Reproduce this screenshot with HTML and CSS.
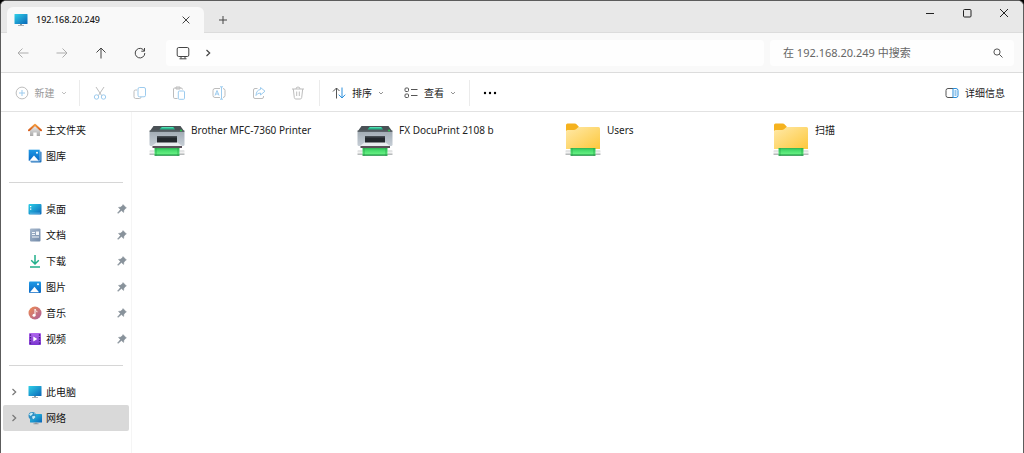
FILE: index.html
```html
<!DOCTYPE html>
<html lang="zh-CN">
<head>
<meta charset="utf-8">
<title>192.168.20.249</title>
<link rel="stylesheet" href="styles.css">
</head>
<body>
<svg class="sprite" aria-hidden="true">
  <defs>
    <linearGradient id="g-screen" x1="0" y1="0" x2="1" y2="1"><stop offset="0" stop-color="#2fd0e8"/><stop offset="1" stop-color="#0a66b8"/></linearGradient>
    <linearGradient id="g-blue" x1="0" y1="0" x2="0" y2="1"><stop offset="0" stop-color="#1f9be6"/><stop offset="1" stop-color="#0a68c4"/></linearGradient>
    <linearGradient id="g-roof" x1="0" y1="0" x2="0" y2="1"><stop offset="0" stop-color="#f39b3f"/><stop offset="1" stop-color="#d65a18"/></linearGradient>
    <linearGradient id="g-wall" x1="0" y1="0" x2="0" y2="1"><stop offset="0" stop-color="#eeeeee"/><stop offset="1" stop-color="#a9a9a9"/></linearGradient>
    <linearGradient id="g-doc" x1="0" y1="0" x2="1" y2="1"><stop offset="0" stop-color="#a9bace"/><stop offset="1" stop-color="#7189a8"/></linearGradient>
    <linearGradient id="g-music" x1="0" y1="0" x2="1" y2="1"><stop offset="0" stop-color="#f08d50"/><stop offset="1" stop-color="#a95c9d"/></linearGradient>
    <linearGradient id="g-video" x1="0" y1="0" x2="0" y2="1"><stop offset="0" stop-color="#b067ee"/><stop offset="1" stop-color="#7a35cf"/></linearGradient>
    <linearGradient id="g-folder" x1="0" y1="0" x2="1" y2="1"><stop offset="0" stop-color="#ffe9a8"/><stop offset="1" stop-color="#fdc83c"/></linearGradient>
    <linearGradient id="g-cable" x1="0" y1="0" x2="0" y2="1"><stop offset="0" stop-color="#2fb052"/><stop offset=".25" stop-color="#42d869"/><stop offset=".7" stop-color="#62ee80"/><stop offset="1" stop-color="#12853a"/></linearGradient>
    <linearGradient id="g-pipe" x1="0" y1="0" x2="0" y2="1"><stop offset="0" stop-color="#c9cccd"/><stop offset=".4" stop-color="#f6f6f6"/><stop offset="1" stop-color="#a9adae"/></linearGradient>
    <linearGradient id="g-body" x1="0" y1="0" x2="0" y2="1"><stop offset="0" stop-color="#a3adb6"/><stop offset="1" stop-color="#c6ced6"/></linearGradient>
  </defs>
  <symbol id="i-monitor" viewBox="0 0 14 14">
    <rect x=".5" y="1" width="13" height="10" rx=".6" fill="url(#g-screen)"/>
    <path d="M6 11h2v1.2H6z" fill="#8e979e"/><path d="M4 12h6v1H4z" fill="#aab2b8"/>
  </symbol>
  <symbol id="i-network" viewBox="0 0 14 14">
    <rect x="2" y="3" width="12" height="8.500" rx=".6" fill="url(#g-screen)"/>
    <path d="M7 11.500h2v1H7zM5.500 12.300h5v.9h-5z" fill="#8e979e"/>
    <circle cx="4.300" cy="4.800" r="3.800" fill="#2f8fc4"/>
    <path d="M1 3.500l2-1.800 2 .3-.8 1.700L2.500 5zM4 5.500l2.500-.7L7.500 6 5.500 8.300 4.500 7.500zM6 1.700l1.500 1.200-.7.700z" fill="#c6ecf5"/>
  </symbol>
  <symbol id="i-home" viewBox="0 0 14 14">
    <path d="M2 6.500L7 2.500l5 4V13H8.700V9.500H5.300V13H2z" fill="url(#g-wall)"/>
    <path d="M1 7.300L7 1.800l6 5.500" fill="none" stroke="url(#g-roof)" stroke-width="1.900" stroke-linecap="round" stroke-linejoin="round"/>
  </symbol>
  <symbol id="i-gallery" viewBox="0 0 14 14">
    <rect x="2.500" y="2.500" width="11" height="11" rx="1" fill="#1f73bd"/>
    <rect x=".5" y=".5" width="11.500" height="11.500" rx="1" fill="url(#g-blue)" stroke="#e5f3fc" stroke-width=".5"/>
    <path d="M1.500 11.700L6 6.500l4.700 5.200z" fill="#fff"/><circle cx="9" cy="3.700" r="1" fill="#fff"/>
  </symbol>
  <symbol id="i-desktop" viewBox="0 0 14 14">
    <rect x=".5" y="2" width="13" height="10.500" rx="1" fill="url(#g-screen)"/>
    <path d="M2 4h1.300v1.300H2zM2 6.500h1.300v1.300H2z" fill="#fff"/><path d="M2 10.700h10v.7H2z" fill="#6fc1ee"/>
  </symbol>
  <symbol id="i-doc" viewBox="0 0 14 14">
    <rect x="2" y=".5" width="10.500" height="13" rx="1" fill="url(#g-doc)"/>
    <path d="M4 4h3v1H4zM4 6h3v1H4zM4 8.500h7v1H4zM8 3.500h3v3.500H8z" fill="#f2f6fa"/>
  </symbol>
  <symbol id="i-down" viewBox="0 0 14 14">
    <path d="M7 1v8.500M3.200 6.200L7 10l3.800-3.800M2 13h10" fill="none" stroke="#22b08b" stroke-width="1.500"/>
  </symbol>
  <symbol id="i-pic" viewBox="0 0 14 14">
    <rect x="1" y="1.500" width="12" height="11.500" rx="1" fill="url(#g-blue)"/>
    <path d="M2 12.300l4.500-5.500 4.500 5.500z" fill="#fff"/><circle cx="10" cy="4.300" r="1" fill="#fff"/>
  </symbol>
  <symbol id="i-music" viewBox="0 0 14 14">
    <circle cx="7" cy="7" r="6.500" fill="url(#g-music)"/>
    <circle cx="6" cy="9.200" r="1.500" fill="#fff"/><path d="M7 9.200V3.200c.3 1.300 2 1.500 2 3" fill="none" stroke="#fff" stroke-width="1"/>
  </symbol>
  <symbol id="i-video" viewBox="0 0 14 14">
    <rect x="1" y="1" width="12" height="12" rx="1" fill="url(#g-video)"/>
    <path d="M2.500 2.300v10M11.500 2.300v10" stroke="#45187f" stroke-width="1.300" stroke-dasharray="1.400 1.300"/>
    <path d="M5.300 4.500L9.300 7l-4 2.500z" fill="#fff"/>
  </symbol>
  <symbol id="i-pin" viewBox="0 0 10 10">
    <path d="M6 .6L9.400 4 8.500 4.500 6.900 6.200 6.600 8.500 4.400 6.600 1 9.400.6 9 3.400 5.600 1.500 3.400 3.800 3.100 5.500 1.500z" fill="#88929b" stroke="#88929b" stroke-width=".5"/>
  </symbol>
  <symbol id="i-cable" viewBox="0 0 36 8">
    <rect x=".5" y="2.500" width="35" height="4.500" rx=".5" fill="url(#g-pipe)"/>
    <rect x="5.500" y="0" width="25" height="7.800" fill="url(#g-cable)"/>
    <path d="M7 0v7.800M29 0v7.800" stroke="#1f9a45" stroke-width=".6"/>
  </symbol>
  <symbol id="i-printer" viewBox="0 0 36 36">
    <path d="M4.500 3h27L35 8H1z" fill="#4a5156"/>
    <path d="M12.500 4h12l1.500 2.500H10.500z" fill="#28b88d"/><path d="M13 4h11l.6.900H12.400z" fill="#52ddb0"/>
    <path d="M.5 7.500h35v1.500H.5z" fill="#5c646a"/><circle cx="32" cy="7.500" r=".9" fill="#25d34a"/>
    <path d="M.5 9h35v12.500q0 1.500-1.500 1.500H2Q.5 23 .5 21.500z" fill="url(#g-body)"/>
    <rect x="8" y="13" width="20" height="7" fill="#22272c"/><path d="M8 13h20v1.500H8z" fill="#454c52"/>
    <path d="M7.500 19.500h21l5 3.700h-31z" fill="#e9ecef"/><path d="M3.500 23h29.500v2H3.500z" fill="#5a5058"/>
    <use href="#i-cable" x="0" y="25" width="36" height="8"/>
  </symbol>
  <symbol id="i-folder" viewBox="0 0 36 36">
    <path d="M1 2q0-1.500 1.500-1.500h7q1.500 0 2.500 1.200L14 4l-3 4H1z" fill="#f5b21e"/>
    <path d="M1 8.500q0-1.500 1.500-1.500H9q1 0 2-.8L13 4.500q.7-.5 1.500-.5h19q1.500 0 1.500 1.500V26H1z" fill="url(#g-folder)"/>
    <use href="#i-cable" x="0" y="25" width="36" height="8"/>
  </symbol>
  <symbol id="i-chev" viewBox="0 0 6 6"><path d="M1 2l2 2 2-2" fill="none" stroke="currentColor" stroke-width=".9"/></symbol>
  <symbol id="i-right" viewBox="0 0 8 8"><path d="M2.500 1L5.700 4 2.500 7" fill="none" stroke="currentColor" stroke-width="1.200"/></symbol>
</svg>

<div class="window">
  <header class="titlebar">
    <div class="tab">
      <svg class="ic14"><use href="#i-monitor"/></svg>
      <span class="tab-title">192.168.20.249</span>
      <button class="tab-close" aria-label="关闭标签页"><svg class="ic8" viewBox="0 0 8 8"><path d="M.6.600l6.800 6.800M7.400.600L.6 7.400" class="ln"/></svg></button>
    </div>
    <button class="tab-new" aria-label="新标签页"><svg class="ic10" viewBox="0 0 10 10"><path d="M5 1v8M1 5h8" class="ln"/></svg></button>
    <div class="win-controls">
      <button aria-label="最小化"><svg class="ic10" viewBox="0 0 10 10"><path d="M1 5.500h8" class="ln"/></svg></button>
      <button aria-label="最大化"><svg class="ic10" viewBox="0 0 10 10"><rect x="1.500" y="1.500" width="7.500" height="7.500" rx="1" class="ln"/></svg></button>
      <button aria-label="关闭"><svg class="ic10" viewBox="0 0 10 10"><path d="M1 1l8 8M9 1L1 9" class="ln"/></svg></button>
    </div>
  </header>

  <nav class="navbar">
    <div class="nav-buttons">
      <button class="off" aria-label="后退"><svg class="ic12" viewBox="0 0 12 12"><path d="M11.500 6H1.500M5.500 1.500L1 6l4.500 4.500" class="ln"/></svg></button>
      <button class="off" aria-label="前进"><svg class="ic12" viewBox="0 0 12 12"><path d="M.5 6h10M6.500 1.500L11 6l-4.500 4.500" class="ln"/></svg></button>
      <button aria-label="向上"><svg class="ic12" viewBox="0 0 12 12"><path d="M6 11.500V1.500M1.500 5.500L6 1l4.500 4.500" class="ln"/></svg></button>
      <button aria-label="刷新"><svg class="ic12" viewBox="0 0 12 12"><path d="M10.300 4A4.800 4.800 0 1 0 10.800 6M10.500 1v3.200H7.300" class="ln"/></svg></button>
    </div>
    <div class="address">
      <button aria-label="网络位置"><svg class="ic14" viewBox="0 0 14 14"><rect x="1.200" y="1.500" width="11.600" height="9" rx="1.500" class="ln"/><path d="M5 10.500v2M9 10.500v2M3.500 12.800h7" class="ln"/></svg></button>
      <button aria-label="展开"><svg class="ic8"><use href="#i-right"/></svg></button>
    </div>
    <div class="search">
      <input type="text" aria-label="搜索" placeholder="在 192.168.20.249 中搜索">
      <svg class="ic10" viewBox="0 0 10 10"><circle cx="4" cy="4" r="3.100" class="ln"/><path d="M6.300 6.300L9.500 9.500" class="ln"/></svg>
    </div>
  </nav>

  <div class="toolbar">
    <button class="tool new off"><svg class="ic14" viewBox="0 0 14 14"><circle cx="7" cy="7" r="5.900" class="ln"/><path d="M7 4v6M4 7h6" class="bl"/></svg><span>新建</span><svg class="ic6"><use href="#i-chev"/></svg></button>
    <div class="icons">
      <button class="off" aria-label="剪切"><svg class="ic14" viewBox="0 0 14 14"><path d="M3 1l5.800 8.800M11 1L5.200 9.800" class="ln"/><circle cx="3.500" cy="11" r="2.200" class="bl"/><circle cx="10.500" cy="11" r="2.200" class="bl"/></svg></button>
      <button class="off" aria-label="复制"><svg class="ic14" viewBox="0 0 14 14"><path d="M4 4H2.500Q1 4 1 5.500v5.300Q1 12.500 2.700 12.500h4Q8 12.500 8 11" class="ln"/><rect x="5" y="1.500" width="7.500" height="9.300" rx="1.500" class="bl"/></svg></button>
      <button class="off" aria-label="粘贴"><svg class="ic14" viewBox="0 0 14 14"><path d="M5.500 12.500H2.800Q1.500 12.500 1.500 11.200V3Q1.500 2 2.800 2H9Q10.500 2 10.500 3.500M4 1h4v2H4z" class="ln"/><rect x="6.300" y="5" width="6.200" height="8.300" rx="1" class="bl"/></svg></button>
      <button class="off" aria-label="重命名"><svg class="ic14" viewBox="0 0 14 14"><path d="M8 2.500H3Q1 2.500 1 4.500v5q0 2 2 2h5M11 2.500q2 .2 2 2v5q0 1.800-2 2" class="ln"/><path d="M3 9.500L5 4.500l2 5M3.800 8h2.500M9.500 1v12M8 .8h3M8 13.200h3" class="bl"/></svg></button>
      <button class="off" aria-label="共享"><svg class="ic14" viewBox="0 0 14 14"><path d="M5.500 2.500H3Q1.500 2.500 1.500 4v7q0 1.500 1.500 1.500h7q1.500 0 1.500-1.500v-1" class="ln"/><path d="M8.500 1.500L13 5.200 8.500 9V7Q5.500 6.800 4 9.500 4.300 4 8.500 3.500z" class="bl"/></svg></button>
      <button class="off" aria-label="删除"><svg class="ic14" viewBox="0 0 14 14"><path d="M1 3h12M5 3Q5 1 7 1t2 2M2.300 3l1 8.500q.2 1.500 1.500 1.500h4.400q1.300 0 1.500-1.500l1-8.500M5.700 5.500v4.500M8.300 5.500v4.500" class="ln"/></svg></button>
    </div>
    <div class="menus">
      <button class="tool"><svg class="ic14" viewBox="0 0 14 14"><path d="M4.500 12.500V2M1 5.500L4.500 2 7.500 5" class="ln"/><path d="M10 1.500v10.300M6.800 8.700L10 12l3.200-3.300" class="bl"/></svg><span>排序</span><svg class="ic6"><use href="#i-chev"/></svg></button>
      <button class="tool"><svg class="ic14" viewBox="0 0 14 14"><rect x="1" y="2" width="3.500" height="3.500" rx="1" class="ln"/><rect x="1" y="8" width="3.500" height="3.500" rx="1" class="ln"/><path d="M7 3.500h6.500M7 9.500h6.500" class="ln"/></svg><span>查看</span><svg class="ic6"><use href="#i-chev"/></svg></button>
    </div>
    <button class="more" aria-label="更多"><svg class="ic14" viewBox="0 0 14 14"><circle cx="2" cy="7" r="1.200"/><circle cx="7" cy="7" r="1.200"/><circle cx="12" cy="7" r="1.200"/></svg></button>
    <button class="tool details"><svg class="ic14" viewBox="0 0 14 14"><path d="M8 2.500H3q-2 0-2 2v5q0 2 2 2h5" class="ln"/><path d="M8 2.500h3q2 0 2 2v5q0 2-2 2H8zM9.500 5h2M9.500 7h2M9.500 9h2" class="bl"/></svg><span>详细信息</span></button>
  </div>

  <div class="body">
    <aside class="sidebar">
      <ul>
        <li><a href="#"><svg class="ic14"><use href="#i-home"/></svg>主文件夹</a></li>
        <li><a href="#"><svg class="ic14"><use href="#i-gallery"/></svg>图库</a></li>
      </ul>
      <hr>
      <ul>
        <li><a href="#"><svg class="ic14"><use href="#i-desktop"/></svg>桌面<svg class="pin"><use href="#i-pin"/></svg></a></li>
        <li><a href="#"><svg class="ic14"><use href="#i-doc"/></svg>文档<svg class="pin"><use href="#i-pin"/></svg></a></li>
        <li><a href="#"><svg class="ic14"><use href="#i-down"/></svg>下载<svg class="pin"><use href="#i-pin"/></svg></a></li>
        <li><a href="#"><svg class="ic14"><use href="#i-pic"/></svg>图片<svg class="pin"><use href="#i-pin"/></svg></a></li>
        <li><a href="#"><svg class="ic14"><use href="#i-music"/></svg>音乐<svg class="pin"><use href="#i-pin"/></svg></a></li>
        <li><a href="#"><svg class="ic14"><use href="#i-video"/></svg>视频<svg class="pin"><use href="#i-pin"/></svg></a></li>
      </ul>
      <hr>
      <ul class="tree">
        <li><a href="#"><svg class="ic8"><use href="#i-right"/></svg><svg class="ic14"><use href="#i-monitor"/></svg>此电脑</a></li>
        <li><a href="#" class="selected"><svg class="ic8"><use href="#i-right"/></svg><svg class="ic14"><use href="#i-network"/></svg>网络</a></li>
      </ul>
    </aside>
    <main class="files">
      <a href="#"><svg class="ic36"><use href="#i-printer"/></svg><span>Brother MFC-7360 Printer</span></a>
      <a href="#"><svg class="ic36"><use href="#i-printer"/></svg><span>FX DocuPrint 2108 b</span></a>
      <a href="#"><svg class="ic36"><use href="#i-folder"/></svg><span>Users</span></a>
      <a href="#"><svg class="ic36"><use href="#i-folder"/></svg><span>扫描</span></a>
    </main>
  </div>
</div>
</body>
</html>
```
FILE: styles.css
```css
* { box-sizing: border-box; }
html, body { height: 100%; }
body {
  margin: 0;
  background: #000;
  color: #1b1b1b;
  font: 10px/14px "Noto Sans", "Noto Sans CJK SC", sans-serif;
}
button {
  display: flex;
  align-items: center;
  justify-content: center;
  padding: 0;
  border: 0;
  background: none;
  color: #444;
  font: inherit;
}
a { color: inherit; text-decoration: none; }
ul { margin: 0; padding: 0; list-style: none; }
svg { flex: none; display: block; }
.sprite { position: absolute; width: 0; height: 0; }
.ic6 { width: 6px; height: 6px; }
.ic8 { width: 8px; height: 8px; }
.ic10 { width: 10px; height: 10px; }
.ic12 { width: 12px; height: 12px; }
.ic14 { width: 14px; height: 14px; }
.ic36 { width: 36px; height: 36px; }
.ln, .bl { fill: none; stroke: currentColor; stroke-width: 1; }
.bl { stroke: #2a8fdc; }

.window {
  display: flex;
  flex-direction: column;
  min-height: 100%;
  overflow: hidden;
  border: 1px solid #5c5c5c;
  border-bottom: 0;
  border-radius: 6px 6px 0 0;
  background: #fff;
}

.titlebar {
  display: flex;
  height: 32px;
  border-bottom: 1px solid #dcdcdc;
  background: #e8e8e8;
}
.tab {
  display: flex;
  align-items: center;
  width: 197px;
  height: 26px;
  margin: 6px 0 0 6px;
  padding: 0 9px 0 7px;
  border-radius: 6px 6px 0 0;
  background: #f9f9f9;
}
.tab-title { flex: 1; margin-left: 8px; font-size: 9px; font-weight: 500; }
.tab-close, .tab-new { width: 18px; height: 18px; }
.tab-new { margin: 10px 0 0 10px; }
.win-controls { display: flex; margin-left: auto; padding-right: 1px; }
.win-controls button { width: 37px; height: 24px; color: #222; }

.navbar {
  display: flex;
  align-items: center;
  height: 40px;
  padding-right: 9px;
  border-bottom: 1px solid #dcdcdc;
  background: #f9f9f9;
}
.nav-buttons { display: flex; width: 165px; padding-left: 2px; }
.nav-buttons button { width: 39px; height: 28px; }
.nav-buttons .off { color: #adadad; }
.address, .search {
  display: flex;
  align-items: center;
  height: 26px;
  border-radius: 4px;
  background: #fefefe;
}
.address { flex: 1; gap: 14px; padding-left: 10px; }
.search { width: 244px; margin-left: 6px; padding: 0 11px 0 13px; color: #555; }
.search input {
  flex: 1;
  min-width: 0;
  padding: 0;
  border: 0;
  outline: 0;
  background: none;
  font: 11px/16px "Noto Sans", "Noto Sans CJK SC", sans-serif;
}
.search input::placeholder { color: #666; opacity: 1; }

.toolbar {
  display: flex;
  align-items: center;
  height: 39px;
  padding: 2px 18px 0 0;
  border-bottom: 1px solid #e2e2e2;
}
.tool { gap: 6px; color: #555; }
.tool span { color: #222; }
.tool .ic6 { color: #888; }
.toolbar .off { color: #bdbdbd; }
.toolbar .off span { color: #999; }
.toolbar .off .ic6 { color: #b8b8b8; }
.toolbar .off .bl { stroke: #9ccbee; }
.new, .icons, .menus { height: 26px; border-right: 1px solid #ebebeb; }
.new { width: 79px; padding-left: 1px; }
.icons { display: flex; width: 240px; padding-right: 1px; }
.icons button { flex: 1; }
.menus { display: flex; gap: 20px; width: 150px; padding-left: 12px; }
.more { margin-left: 13px; color: #222; }
.details { margin-left: auto; }

.body { display: flex; flex: 1; }
.sidebar { width: 131px; padding: 5px 2px 0; border-right: 1px solid #f5f5f5; color: #111; }
.sidebar a {
  display: flex;
  align-items: center;
  gap: 4px;
  height: 26px;
  padding-left: 25px;
}
.sidebar .tree a { padding-left: 7px; }
.tree .ic8 { margin-right: 6px; color: #777; }
.sidebar .selected { border-radius: 2px; background: #d9d9d9; }
.sidebar hr { height: 1px; margin: 13px 6px; border: 0; background: #d6d6d6; }
.pin { width: 10px; height: 10px; margin: 0 2px 0 auto; }

.files {
  display: grid;
  flex: 1;
  grid-template-columns: repeat(auto-fill, 208px);
  align-content: start;
  padding: 11px 0 0 17px;
}
.files a { display: flex; gap: 6px; }
.files span { color: #222; }
```
